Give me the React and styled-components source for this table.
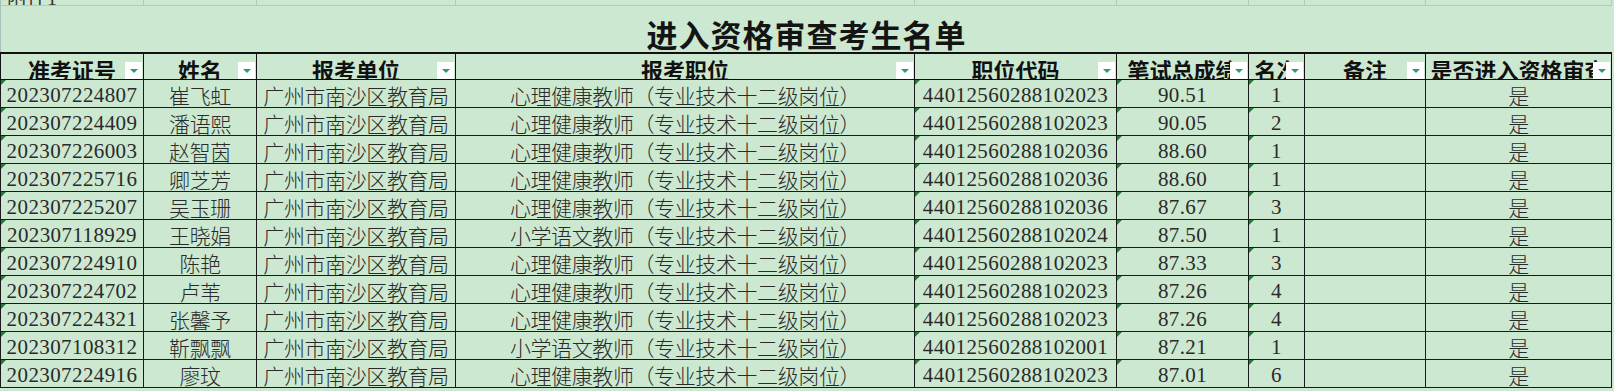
import styled, { createGlobalStyle } from 'styled-components';

const COLS = '144px 113px 199px 459px 202px 132px 56px 121px 186px';

const GlobalStyle = createGlobalStyle`
  body {
    margin: 0;
    background: #cde8d0;
  }
`;

const headers = ['准考证号', '姓名', '报考单位', '报考职位', '职位代码', '笔试总成绩', '名次', '备注', '是否进入资格审查'];

const XL = '心理健康教师（专业技术十二级岗位）';
const YW = '小学语文教师（专业技术十二级岗位）';

const rows = [
  ['202307224807', '崔飞虹', XL, '44012560288102023', '90.51', '1'],
  ['202307224409', '潘语熙', XL, '44012560288102023', '90.05', '2'],
  ['202307226003', '赵智茵', XL, '44012560288102036', '88.60', '1'],
  ['202307225716', '卿芝芳', XL, '44012560288102036', '88.60', '1'],
  ['202307225207', '吴玉珊', XL, '44012560288102036', '87.67', '3'],
  ['202307118929', '王晓娟', YW, '44012560288102024', '87.50', '1'],
  ['202307224910', '陈艳', XL, '44012560288102023', '87.33', '3'],
  ['202307224702', '卢苇', XL, '44012560288102023', '87.26', '4'],
  ['202307224321', '张馨予', XL, '44012560288102023', '87.26', '4'],
  ['202307108312', '靳飘飘', YW, '44012560288102001', '87.21', '1'],
  ['202307224916', '廖玟', XL, '44012560288102023', '87.01', '6'],
];

const Sheet = styled.div`
  width: 1612px;
  font-family: "Liberation Serif", "Noto Sans CJK SC", serif;
`;

const GridRow = styled.div`
  display: grid;
  grid-template-columns: ${COLS};
  height: ${(p) => p.$h}px;
`;

const GhostCell = styled.div`
  box-sizing: border-box;
  border-right: 1px solid #b3c9c1;
  border-bottom: 1px solid #b3c9c1;
  overflow: hidden;
  display: flex;
  align-items: flex-end;
  padding-left: 6px;
  font-size: 20px;
  line-height: 14px;
  color: #333;
  &:first-child {
    border-left: 1px solid #a9bfb7;
  }
`;

const Title = styled.div`
  box-sizing: border-box;
  height: 46px;
  display: flex;
  align-items: center;
  justify-content: center;
  padding-top: 8px;
  font-family: "Noto Sans CJK SC", serif;
  font-size: 31px;
  font-weight: 700;
  letter-spacing: 1px;
  color: #141414;
  border-left: 1px solid #a9bfb7;
`;

const HeadCell = styled.div`
  position: relative;
  box-sizing: border-box;
  border-top: 2px solid #111;
  border-right: 1px solid #111;
  border-bottom: 1px solid #111;
  display: flex;
  align-items: center;
  justify-content: center;
  padding-top: 5px;
  font-family: "Noto Sans CJK SC", serif;
  font-size: 22px;
  font-weight: 700;
  color: #111;
  white-space: nowrap;
  overflow: hidden;
  &:first-child {
    border-left: 1px solid #111;
  }
`;

const Dropdown = styled.span`
  position: absolute;
  right: 1px;
  bottom: 0;
  width: 17px;
  height: 17px;
  background: #fff;
  display: flex;
  align-items: center;
  justify-content: center;
  &::after {
    content: '';
    border-left: 4px solid transparent;
    border-right: 4px solid transparent;
    border-top: 4px solid #2a9a78;
  }
`;

const Cell = styled.div`
  position: relative;
  box-sizing: border-box;
  border-right: 1px solid #1a1a1a;
  border-bottom: 1px solid #1a1a1a;
  display: flex;
  align-items: center;
  justify-content: center;
  padding-top: 3px;
  font-size: 21px;
  font-weight: 300;
  color: #2a2a2a;
  white-space: nowrap;
  overflow: hidden;
  letter-spacing: ${(p) => (p.$num ? '0.4px' : '-0.4px')};
  &:first-child {
    border-left: 1px solid #1a1a1a;
  }
  &::before {
    content: '';
    display: ${(p) => (p.$flag ? 'block' : 'none')};
    position: absolute;
    left: 0;
    top: 0;
    border-top: 5px solid #1f7a33;
    border-right: 5px solid transparent;
  }
`;

export default function App() {
  return (
    <Sheet>
      <GlobalStyle />
      <GridRow $h={6}>
        {headers.map((h, i) => (
          <GhostCell key={h}>{i === 0 ? '附件1' : ''}</GhostCell>
        ))}
      </GridRow>
      <Title>进入资格审查考生名单</Title>
      <GridRow $h={28}>
        {headers.map((h) => (
          <HeadCell key={h}>
            {h}
            <Dropdown />
          </HeadCell>
        ))}
      </GridRow>
      {rows.map((r) => (
        <GridRow $h={28} key={r[0]}>
          <Cell $num $flag>{r[0]}</Cell>
          <Cell>{r[1]}</Cell>
          <Cell>广州市南沙区教育局</Cell>
          <Cell>{r[2]}</Cell>
          <Cell $num $flag>{r[3]}</Cell>
          <Cell $num $flag>{r[4]}</Cell>
          <Cell $num $flag>{r[5]}</Cell>
          <Cell />
          <Cell>是</Cell>
        </GridRow>
      ))}
    </Sheet>
  );
}
